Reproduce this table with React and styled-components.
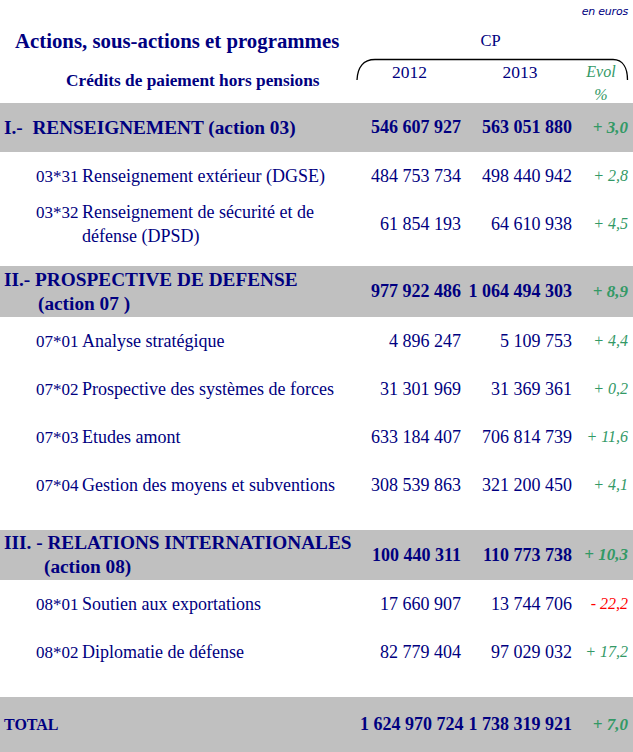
import React from 'react';
import styled, { createGlobalStyle } from 'styled-components';

const GlobalStyle = createGlobalStyle`
  html, body {
    margin: 0;
    padding: 0;
    background: #fff;
  }
  body {
    font-family: "Liberation Serif", "Times New Roman", serif;
    color: #000080;
  }
`;

const COLS = '360px 105px 110px 58px';

const Page = styled.div`
  width: 633px;
  overflow: hidden;
`;

const EnEuros = styled.div`
  height: 24px;
  line-height: 24px;
  text-align: right;
  padding-right: 5px;
  font-size: 11px;
  font-style: italic;
  font-family: "DejaVu Sans", Verdana, sans-serif;
  letter-spacing: -0.2px;
`;

const TitleRow = styled.div`
  display: grid;
  grid-template-columns: 360px 1fr;
  height: 34px;
  align-items: center;
`;

const Title = styled.h1`
  margin: 0;
  padding-left: 15px;
  font-size: 20.8px;
  font-weight: bold;
`;

const CP = styled.div`
  text-align: center;
  padding-right: 12px;
  font-size: 16.5px;
`;

const SubHead = styled.div`
  position: relative;
  display: grid;
  grid-template-columns: ${COLS};
  height: 45px;
`;

const Credits = styled.div`
  font-weight: bold;
  font-size: 17.3px;
  padding-left: 66px;
  padding-top: 13px;
  white-space: nowrap;
`;

const Year = styled.div`
  text-align: center;
  font-size: 17.5px;
  padding-top: 4px;
  padding-right: ${p => p.$pr || 0}px;
`;

const Evol = styled.div`
  text-align: center;
  color: #339966;
  font-style: italic;
  font-size: 16px;
  line-height: 23px;
  padding-top: 2px;
  padding-right: 6px;
`;

const Bracket = styled.svg`
  position: absolute;
  left: 355px;
  top: 0;
  pointer-events: none;
`;

const Band = styled.div`
  display: grid;
  grid-template-columns: ${COLS};
  align-items: center;
  background: #c0c0c0;
  height: ${p => p.$h}px;
  font-weight: bold;
`;

const BandLabel = styled.div`
  padding-left: 4px;
  line-height: 24px;
  font-size: ${p => (p.$small ? 16 : 19.3)}px;
  white-space: pre;
`;

const Indent = styled.div`
  padding-left: ${p => p.$pl}px;
`;

const Num = styled.div`
  text-align: right;
  padding-right: ${p => p.$pr}px;
  white-space: nowrap;
  font-size: 18px;
`;

const Pct = styled.div`
  text-align: right;
  padding-right: 5px;
  font-style: italic;
  white-space: nowrap;
  font-size: ${p => (p.$bold ? 17 : 16)}px;
  font-weight: ${p => (p.$bold ? 'bold' : 'normal')};
  color: ${p => (p.$neg ? '#ff0000' : '#339966')};
`;

const Row = styled.div`
  display: grid;
  grid-template-columns: ${COLS};
  align-items: center;
  height: 48px;
`;

const Item = styled.div`
  display: flex;
  align-items: baseline;
  padding-left: 36px;
  line-height: 24px;
  font-size: 18px;
`;

const Code = styled.span`
  font-size: 17px;
  width: 46px;
  flex: none;
`;

const Gap = styled.div`
  height: ${p => p.$h}px;
`;

const fmtPct = v => (v < 0 ? `- ${String(-v).replace('.', ',')}` : `+ ${v.toFixed(1).replace('.', ',')}`);

const sections = [
  {
    band: 49,
    label: ['I.-  RENSEIGNEMENT (action 03)'],
    v: ['546 607 927', '563 051 880', 3.0],
    gap: 18,
    rows: [
      { code: '03*31', label: 'Renseignement extérieur (DGSE)', v: ['484 753 734', '498 440 942', 2.8] },
      { code: '03*32', label: 'Renseignement de sécurité et de défense (DPSD)', v: ['61 854 193', '64 610 938', 4.5] },
    ],
  },
  {
    band: 51,
    label: ['II.- PROSPECTIVE DE DEFENSE', '(action 07 )'],
    indent: 34,
    v: ['977 922 486', '1 064 494 303', 8.9],
    gap: 21,
    rows: [
      { code: '07*01', label: 'Analyse stratégique', v: ['4 896 247', '5 109 753', 4.4] },
      { code: '07*02', label: 'Prospective des systèmes de forces', v: ['31 301 969', '31 369 361', 0.2] },
      { code: '07*03', label: 'Etudes amont', v: ['633 184 407', '706 814 739', 11.6] },
      { code: '07*04', label: 'Gestion des moyens et subventions', v: ['308 539 863', '321 200 450', 4.1] },
    ],
  },
  {
    band: 50,
    label: ['III. - RELATIONS INTERNATIONALES', '(action 08)'],
    indent: 40,
    v: ['100 440 311', '110 773 738', 10.3],
    gap: 21,
    rows: [
      { code: '08*01', label: 'Soutien aux exportations', v: ['17 660 907', '13 744 706', -22.2] },
      { code: '08*02', label: 'Diplomatie de défense', v: ['82 779 404', '97 029 032', 17.2] },
    ],
  },
];

export default function App() {
  return (
    <Page>
      <GlobalStyle />
      <EnEuros>en euros</EnEuros>
      <TitleRow>
        <Title>Actions, sous-actions et programmes</Title>
        <CP>CP</CP>
      </TitleRow>
      <SubHead>
        <Credits>Crédits de paiement hors pensions</Credits>
        <Year $pr={6}>2012</Year>
        <Year $pr={0}>2013</Year>
        <Evol>
          Evol
          <br />%
        </Evol>
        <Bracket width="276" height="24" viewBox="0 0 276 24">
          <path
            d="M2 22 C2.5 10 8 1.5 20 1.5 L258 1.5 C268 1.5 272.5 10 272.5 22"
            fill="none"
            stroke="#000"
            strokeWidth="1.3"
          />
        </Bracket>
      </SubHead>

      {sections.map((s, i) => (
        <React.Fragment key={i}>
          <Band $h={s.band}>
            <BandLabel>
              {s.label[0]}
              {s.label[1] && <Indent $pl={s.indent}>{s.label[1]}</Indent>}
            </BandLabel>
            <Num $pr={4}>{s.v[0]}</Num>
            <Num $pr={3}>{s.v[1]}</Num>
            <Pct $bold>{fmtPct(s.v[2])}</Pct>
          </Band>
          {s.rows.map(r => (
            <Row key={r.code}>
              <Item>
                <Code>{r.code}</Code>
                <span>{r.label}</span>
              </Item>
              <Num $pr={4}>{r.v[0]}</Num>
              <Num $pr={3}>{r.v[1]}</Num>
              <Pct $neg={r.v[2] < 0}>{fmtPct(r.v[2])}</Pct>
            </Row>
          ))}
          <Gap $h={s.gap} />
        </React.Fragment>
      ))}

      <Band $h={55}>
        <BandLabel $small>TOTAL</BandLabel>
        <Num $pr={4}>1 624 970 724</Num>
        <Num $pr={3}>1 738 319 921</Num>
        <Pct $bold>{fmtPct(7.0)}</Pct>
      </Band>
    </Page>
  );
}
